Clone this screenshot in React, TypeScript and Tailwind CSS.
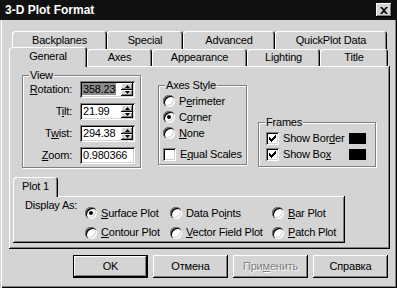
import type { ReactNode } from 'react'

const raised = 'shadow-[inset_-1px_-1px_#000,inset_1px_1px_#fff,inset_-2px_-2px_#808080]'
const sunken = 'shadow-[inset_1px_1px_#808080,inset_-1px_-1px_#fff,inset_2px_2px_#000,inset_-2px_-2px_#d4d4d4]'
const tabEdge = 'rounded-t-[3px] shadow-[inset_1px_1px_#fff,inset_-1px_0_#000,inset_-2px_0_#808080]'

function Group({ label, className, children }: { label: string; className: string; children: ReactNode }) {
  return (
    <div className={`relative border border-[#808080] shadow-[inset_1px_1px_#fff,1px_1px_#fff] ${className}`}>
      <span className="absolute left-[6px] -top-[8px] bg-[#d4d4d4] px-[1px] leading-[14px]">{label}</span>
      {children}
    </div>
  )
}

function Radio({ checked }: { checked?: boolean }) {
  return (
    <span className="flex h-[12px] w-[12px] shrink-0 items-center justify-center rounded-full bg-white shadow-[inset_1px_1px_#808080,inset_2px_2px_#000,inset_-1px_-1px_#fff,inset_-2px_-2px_#d4d4d4]">
      {checked && <span className="h-[4px] w-[4px] rounded-full bg-black" />}
    </span>
  )
}

function Check({ checked }: { checked?: boolean }) {
  return (
    <span className={`flex h-[13px] w-[13px] shrink-0 items-center justify-center bg-white ${sunken}`}>
      {checked && (
        <svg width="7" height="7" viewBox="0 0 7 7">
          <path d="M0 2h1v1h1v1h1v-1h1v-1h1v-1h1v-1h1v3h-1v1h-1v1h-1v1h-1v1h-1v-1h-1v-1h-1z" fill="#000" />
        </svg>
      )}
    </span>
  )
}

function Spin() {
  return (
    <span className="flex h-[13px] w-[12px] flex-col">
      <span className={`flex flex-1 items-center justify-center bg-[#d4d4d4] ${raised}`}>
        <svg width="5" height="3" viewBox="0 0 5 3"><path d="M2.5 0L5 3H0z" fill="#000" /></svg>
      </span>
      <span className={`flex flex-1 items-center justify-center bg-[#d4d4d4] ${raised}`}>
        <svg width="5" height="3" viewBox="0 0 5 3"><path d="M0 0H5L2.5 3z" fill="#000" /></svg>
      </span>
    </span>
  )
}

function Field({ label, value, spin, selected }: { label: ReactNode; value: string; spin?: boolean; selected?: boolean }) {
  return (
    <div className="flex h-[17px] items-center">
      <span className="w-[49px] text-right">{label}</span>
      <div className={`ml-[8px] flex h-[17px] w-[55px] items-center bg-white pl-[2px] pr-[2px] ${sunken}`}>
        <span className="flex-1">
          <span className={`px-[1px] leading-[13px] ${selected ? 'bg-[#8c8c8c]' : ''}`}>{value}</span>
        </span>
        {spin && <Spin />}
      </div>
    </div>
  )
}

function Tab({ label, w, h = 'h-[18px]', extra = '' }: { label: string; w: string; h?: string; extra?: string }) {
  return (
    <div className={`flex items-center justify-center bg-[#d4d4d4] ${w} ${h} ${tabEdge} ${extra}`}>{label}</div>
  )
}

function Btn({ children, def, disabled }: { children: ReactNode; def?: boolean; disabled?: boolean }) {
  return (
    <div
      className={`flex h-[23px] w-[75px] items-center justify-center ${raised} ${def ? 'border border-black' : ''} ${
        disabled ? 'text-[#808080] [text-shadow:1px_1px_#fff]' : ''
      }`}
    >
      {children}
    </div>
  )
}

function Opt({ children, checked }: { children: ReactNode; checked?: boolean }) {
  return (
    <div className="flex h-[18px] items-center gap-[4px]">
      <Radio checked={checked} />
      <span>{children}</span>
    </div>
  )
}

export default function App() {
  return (
    <div className="h-[288px] w-[397px] overflow-hidden whitespace-nowrap bg-[#d4d4d4] font-['Liberation_Sans',Arial,sans-serif] text-[11px] tracking-[-0.2px] text-black shadow-[inset_1px_1px_#d4d4d4,inset_2px_2px_#fff,inset_-1px_-1px_#000,inset_-2px_-2px_#808080]">
      {/* Title bar */}
      <div className="flex h-[20px] items-center justify-between bg-[#111] pl-[5px] pr-[5px]">
        <span className="text-[12px] font-bold tracking-normal text-white">3-D Plot Format</span>
        <div className={`flex h-[14px] w-[16px] items-center justify-center bg-[#d4d4d4] ${raised}`}>
          <svg width="8" height="7" viewBox="0 0 8 7">
            <path d="M0 0h2l2 2 2-2h2L5 3.5 8 7H6L4 5 2 7H0l3-3.5z" fill="#000" />
          </svg>
        </div>
      </div>

      {/* Tabs */}
      <div className="ml-[12px] mt-[11px] flex">
        <Tab label="Backplanes" w="w-[95px]" />
        <Tab label="Special" w="w-[76px]" />
        <Tab label="Advanced" w="w-[92px]" />
        <Tab label="QuickPlot Data" w="w-[112px]" />
      </div>
      <div className="relative z-10 -mt-[2px] ml-[9px] flex h-[19px] items-end">
        <Tab label="General" w="w-[78px]" h="h-[20px]" extra="-mb-px pb-[2px] relative z-10" />
        <Tab label="Axes" w="w-[65px]" h="h-[17px]" />
        <Tab label="Appearance" w="w-[95px]" h="h-[17px]" />
        <Tab label="Lighting" w="w-[73px]" h="h-[17px]" />
        <Tab label="Title" w="w-[68px]" h="h-[17px]" />
      </div>

      {/* Panel */}
      <div className={`ml-[9px] h-[183px] w-[381px] pt-[9px] ${raised}`}>
        <div className="ml-[13px] flex items-start">
          <Group label="View" className="flex h-[93px] w-[119px] flex-col gap-[5px] pt-[5px]">
            <Field label={<><u>R</u>otation:</>} value="358.23" spin selected />
            <Field label={<>T<u>i</u>lt:</>} value="21.99" spin />
            <Field label={<>T<u>w</u>ist:</>} value="294.38" spin />
            <Field label={<><u>Z</u>oom:</>} value="0.980366" />
          </Group>

          <Group label="Axes Style" className="ml-[17px] mt-[10px] h-[80px] w-[89px] pl-[4px] pt-[7px]">
            <div className="flex h-[16px] items-center gap-[4px]"><Radio /><span>P<u>e</u>rimeter</span></div>
            <div className="flex h-[16px] items-center gap-[4px]"><Radio checked /><span>C<u>o</u>rner</span></div>
            <div className="flex h-[16px] items-center gap-[4px]"><Radio /><span><u>N</u>one</span></div>
            <div className="mt-[5px] flex h-[16px] items-center gap-[4px]"><Check /><span>E<u>q</u>ual Scales</span></div>
          </Group>

          <Group label="Frames" className="ml-[11px] mt-[47px] h-[45px] w-[118px] pl-[7px] pr-[9px] pt-[7px]">
            <div className="flex h-[16px] items-center gap-[4px]">
              <Check checked />
              <span>Show Bor<u>d</u>er</span>
              <span className="ml-auto h-[11px] w-[17px] shrink-0 bg-black" />
            </div>
            <div className="flex h-[16px] items-center gap-[4px]">
              <Check checked />
              <span>Show Bo<u>x</u></span>
              <span className="ml-auto h-[11px] w-[17px] shrink-0 bg-black" />
            </div>
          </Group>
        </div>

        {/* Plot 1 */}
        <div className="ml-[4px] mt-[9px]">
          <div className={`relative z-10 -mb-px flex h-[20px] w-[45px] items-center justify-center bg-[#d4d4d4] pb-[1px] ${tabEdge}`}>
            Plot 1
          </div>
          <div className={`flex h-[47px] w-[332px] ${raised}`}>
            <div className="w-[72px] pl-[12px] pt-[1px]">Display As:</div>
            <div className="grid grid-cols-[85px_102px_auto] pt-[8px]">
              <Opt checked><u>S</u>urface Plot</Opt>
              <Opt>Data Po<u>i</u>nts</Opt>
              <Opt><u>B</u>ar Plot</Opt>
              <Opt><u>C</u>ontour Plot</Opt>
              <Opt><u>V</u>ector Field Plot</Opt>
              <Opt><u>P</u>atch Plot</Opt>
            </div>
          </div>
        </div>
      </div>

      {/* Buttons */}
      <div className="ml-[73px] mt-[6px] flex gap-[5px]">
        <Btn def>OK</Btn>
        <Btn>Отмена</Btn>
        <Btn disabled>При<u>м</u>енить</Btn>
        <Btn>Справка</Btn>
      </div>
    </div>
  )
}
